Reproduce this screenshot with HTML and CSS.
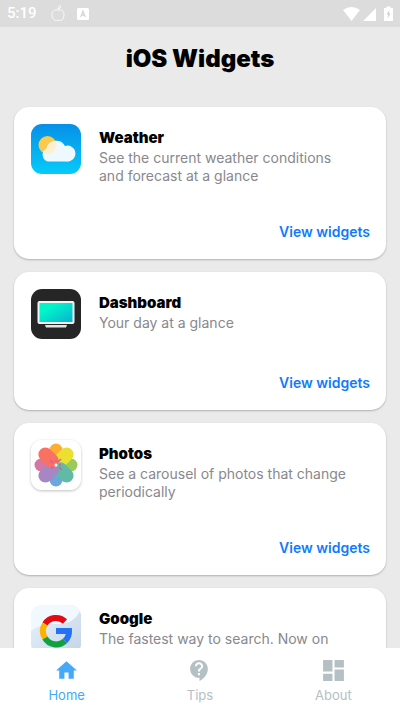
FILE: index.html
```html
<!DOCTYPE html>
<html lang="en">
<head>
<meta charset="utf-8">
<meta name="viewport" content="width=device-width, initial-scale=1">
<title>iOS Widgets</title>
<link rel="stylesheet" href="styles.css">
</head>
<body>
<div class="screen">
  <div class="status">
    <span class="time">5:19</span>
    <svg class="status-apple" viewBox="0 0 14 17" aria-hidden="true"><path d="M7 5.400C5 4.200 1 4.800 1 9.500c0 3 2 6 4 6 1 0 1.300-.4 2.200-.4s1.200.4 2.200.4c2 0 3.600-2.500 3.600-5.500C13 5.500 10 4.200 7 5.400zM7 4.200C6.900 2.300 8 1 9.600.800 9.700 2.700 8.700 4 7 4.200z" fill="none" stroke="#fff" stroke-width=".8"/></svg>
    <svg class="status-app" viewBox="0 0 12 12" aria-hidden="true"><rect width="12" height="12" rx="1.500" fill="#fff"/><path d="M3.700 9 6 3.200 8.300 9M4.500 7.200h3" fill="none" stroke="#d4d4d4" stroke-width="1.200"/></svg>
    <svg class="status-system" viewBox="0 0 50 16" aria-hidden="true"><path d="M0 4Q8.500-2 17 4L8.500 15zM33 2v13H20zM41 2h2.500V.500h4V2H50v13h-9V2z" fill="#fff"/><path d="M46.500 4 43.500 8.500h1.800L44.500 12.500 47.500 7.700H46z" fill="#cfcfcf"/></svg>
  </div>
  <main class="feed">
    <h1 class="page-title">iOS Widgets</h1>
    <article class="card">
      <div class="summary">
        <svg class="app-icon" viewBox="0 0 50 50" aria-hidden="true">
          <defs><linearGradient id="sky" x2="0" y2="1"><stop stop-color="#078fe8"/><stop offset="1" stop-color="#05cbfa"/></linearGradient></defs>
          <rect width="50" height="50" rx="11" fill="url(#sky)"/>
          <circle cx="16.500" cy="21" r="9" fill="#fbc94b"/>
          <path d="M18 37.500a6.700 6.700 0 0 1-2.600-12.700A10 10 0 0 1 34 22a8 8 0 1 1 1 15.500z" fill="#edf9fe"/>
          <path d="M15.400 24.800A10 10 0 0 1 24.800 17.500 9 9 0 0 1 16.500 30q-2 0-4-.8 .6-3 2.900-4.400z" fill="#fdf0cf"/>
        </svg>
        <div class="copy"><h2>Weather</h2><p>See the current weather conditions and forecast at a glance</p></div>
      </div>
      <a class="view" href="#weather">View widgets</a>
    </article>
    <article class="card">
      <div class="summary">
        <svg class="app-icon" viewBox="0 0 50 50" aria-hidden="true">
          <defs><linearGradient id="display" x2="1" y2="1"><stop offset=".3" stop-color="#00f5c8"/><stop offset="1" stop-color="#08aed0"/></linearGradient></defs>
          <rect width="50" height="50" rx="11" fill="#262626"/>
          <rect x="7.500" y="13" width="35" height="21" rx="1" fill="url(#display)" stroke="#f4f4f4" stroke-width="2"/>
          <path d="M14 36h22l-1 2.500H15z" fill="#e5e5e5"/>
        </svg>
        <div class="copy"><h2>Dashboard</h2><p>Your day at a glance</p></div>
      </div>
      <a class="view" href="#dashboard">View widgets</a>
    </article>
    <article class="card">
      <div class="summary">
        <svg class="app-icon raised" viewBox="0 0 50 50" aria-hidden="true">
          <rect width="50" height="50" rx="11" fill="#fff"/>
          <g transform="translate(25 25)">
            <rect x="-6.500" y="-21.500" width="13" height="21" rx="6.500" fill="#fdae32"/>
            <rect x="-6.500" y="-21.500" width="13" height="21" rx="6.500" fill="#9bcb57" transform="rotate(90)"/>
            <rect x="-6.500" y="-21.500" width="13" height="21" rx="6.500" fill="#6ba6dc" transform="rotate(180)"/>
            <rect x="-6.500" y="-21.500" width="13" height="21" rx="6.500" fill="#d577a5" transform="rotate(270)"/>
            <rect x="-7" y="-22" width="14" height="23" rx="7" fill="#ebe02d" transform="rotate(45)"/>
            <rect x="-7" y="-22" width="14" height="23" rx="7" fill="#61baa5" transform="rotate(135)"/>
            <rect x="-7" y="-22" width="14" height="23" rx="7" fill="#a687c4" transform="rotate(225)"/>
            <rect x="-7" y="-22" width="14" height="23" rx="7" fill="#f87162" transform="rotate(315)"/>
            <path d="m2-3 3-3M3 2l3 3M-3-2l-3-3M-3 2l-2 1M0-3v-2M3 0h2" stroke="#dc5b91" stroke-width="1.500"/>
            <circle r="1.500" fill="#fff"/>
          </g>
        </svg>
        <div class="copy"><h2>Photos</h2><p>See a carousel of photos that change periodically</p></div>
      </div>
      <a class="view" href="#photos">View widgets</a>
    </article>
    <article class="card">
      <div class="summary">
        <svg class="app-icon" viewBox="0 0 50 50" aria-hidden="true">
          <defs><linearGradient id="ice" x2="1" y2="1"><stop stop-color="#e9f5fd"/><stop offset="1" stop-color="#c4d3e6"/></linearGradient></defs>
          <rect width="50" height="50" rx="11" fill="url(#ice)"/>
          <path d="M0 26V11A11 11 0 0 1 11 0h28q8 0 10 6Q42 20 25 19 9 18 0 26z" fill="#f1f9fe"/>
          <g fill="none" stroke-width="6" transform="translate(0 1)"><path d="M14 18A13 13 0 0 1 34 15.500" stroke="#e50914"/><path d="M14 32A13 13 0 0 1 14 18" stroke="#fbb300"/><path d="M34 35A13 13 0 0 1 14 32" stroke="#12a13f"/><path d="M25 25h13a13 13 0 0 1-4 10" stroke="#2472f3"/></g>
        </svg>
        <div class="copy"><h2>Google</h2><p>The fastest way to search. Now on</p></div>
      </div>
    </article>
  </main>
  <nav class="tabs" aria-label="Main">
    <a class="tab active" href="#home"><svg viewBox="0 0 24 24" aria-hidden="true"><path d="M10 20v-6h4v6h5v-8h3L12 3 2 12h3v8z"/></svg>Home</a>
    <a class="tab" href="#tips"><svg viewBox="0 0 24 24" aria-hidden="true"><path d="M11.500 2C6.810 2 3 5.810 3 10.500S6.810 19 11.500 19h.5v3c4.860-2.340 8-7 8-11.500C20 5.810 16.190 2 11.500 2zm1 14.500h-2v-2h2v2zm0-3.500h-2c0-3.250 3-3 3-5 0-1.100-.9-2-2-2s-2 .9-2 2h-2c0-2.210 1.790-4 4-4s4 1.790 4 4c0 2.500-3 2.750-3 5z"/></svg>Tips</a>
    <a class="tab" href="#about"><svg viewBox="0 0 24 24" aria-hidden="true"><path d="M2 2h9v11H2zm11 0h9v7h-9zM2 15h9v7H2zm11-4h9v11h-9z"/></svg>About</a>
  </nav>
</div>
</body>
</html>
```
FILE: styles.css
```css
* { box-sizing: border-box; }
body {
  margin: 0;
  background: #eaeaea;
  font-family: Inter, "Liberation Sans", sans-serif;
}
h1, h2, p { margin: 0; }
a { text-decoration: none; }
svg { display: block; flex: none; }

.screen { display: flex; flex-direction: column; height: 100vh; }

.status {
  display: flex;
  flex: none;
  align-items: center;
  height: 27px;
  padding: 0 7px;
  background: #dcdcdc;
  color: #fff;
  font: 500 15px/27px Roboto, sans-serif;
}
.status-apple { width: 14px; height: 17px; margin-left: 14px; }
.status-app { width: 12px; height: 12px; margin-left: 12px; }
.status-system { width: 50px; height: 16px; margin-left: auto; }

.feed { flex: 1; min-height: 0; overflow: hidden; padding: 16px 14px 0; }
.page-title {
  margin-bottom: 32px;
  font-size: 24px;
  font-weight: 900;
  line-height: 32px;
  text-align: center;
  color: #000;
}

.card {
  display: flex;
  flex-direction: column;
  margin-bottom: 13px;
  padding: 17px 16px 17px 17px;
  border-radius: 15px;
  background: #fff;
  box-shadow: 0 1px 2px rgba(0, 0, 0, .25);
}
.summary { display: flex; align-items: flex-start; gap: 18px; }
.app-icon { width: 50px; height: 50px; }
.raised { border-radius: 11px; box-shadow: 0 1px 3px rgba(0, 0, 0, .25); }
.copy { flex: 1; min-width: 0; padding: 3px 0; }
.copy h2 { font-size: 15px; font-weight: 900; line-height: 22px; color: #000; }
.copy p { max-width: 260px; font-size: 14px; line-height: 18px; color: #88888d; }
.view {
  align-self: flex-end;
  margin-top: 34px;
  font-size: 14px;
  font-weight: 600;
  line-height: 20px;
  color: #107aff;
}

.tabs {
  display: grid;
  grid-template-columns: repeat(3, 1fr);
  flex: none;
  height: 63px;
  background: #fff;
}
.tab {
  display: flex;
  flex-direction: column;
  align-items: center;
  gap: 3px;
  padding-top: 10px;
  font-size: 13px;
  line-height: 18px;
  color: #b4c0c4;
}
.tab svg { width: 25px; height: 25px; fill: currentColor; }
.active { color: #43a9f8; }
```
